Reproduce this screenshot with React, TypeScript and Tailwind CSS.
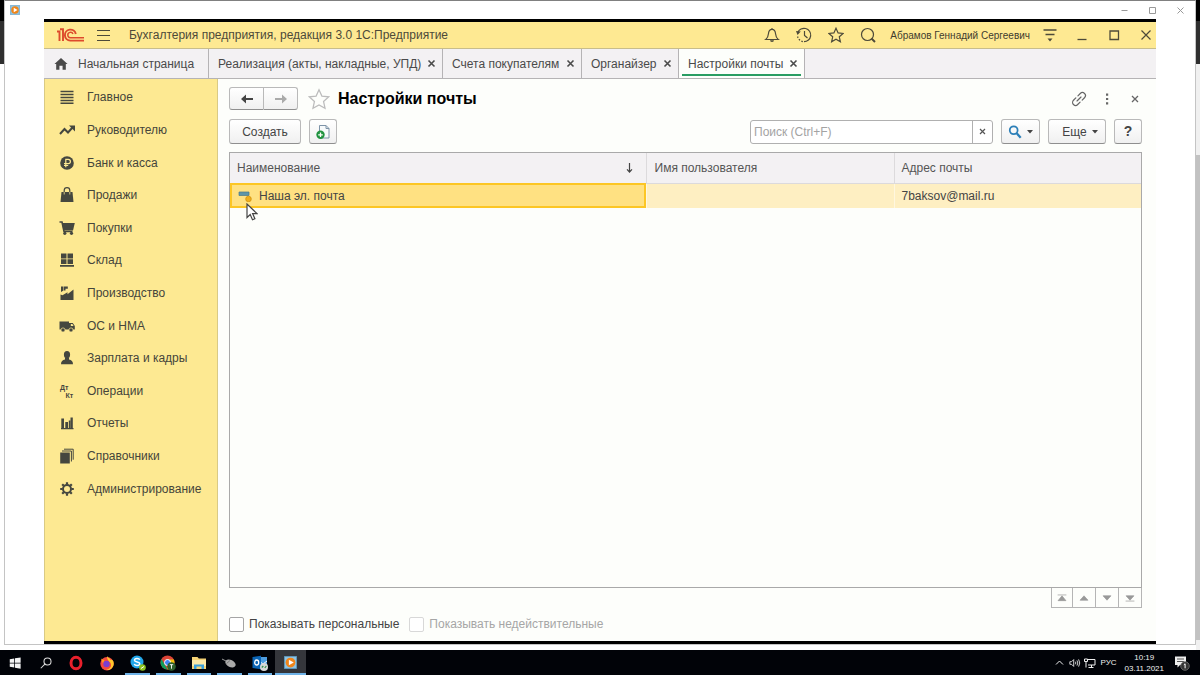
import React, { useState } from 'react';

interface IconProps {
  children: React.ReactNode;
  size?: string;
  className?: string;
  viewBox?: string;
}

const Icon: React.FC<IconProps> = ({ children, size = 'w-4 h-4', className = '', viewBox = '0 0 16 16' }) => (
  <svg viewBox={viewBox} className={`${size} shrink-0 ${className}`} fill="none" stroke="none" aria-hidden="true">
    {children}
  </svg>
);

const sections: { label: string; icon: React.ReactNode }[] = [
  {
    label: 'Главное',
    icon: <path d="M1.500 2.500h13M1.500 5.500h13M1.500 8.500h13M1.500 11.500h13M1.500 14.200h13" stroke="currentColor" strokeWidth="1.500" />,
  },
  {
    label: 'Руководителю',
    icon: (
      <>
        <path d="M1 12l4.500-5 3.500 3.500 4.500-5" stroke="currentColor" strokeWidth="2" />
        <path d="M10 3.500h6v6z" fill="currentColor" />
      </>
    ),
  },
  {
    label: 'Банк и касса',
    icon: (
      <>
        <circle cx="8" cy="8" r="6.800" fill="currentColor" />
        <path d="M6.800 12.200V4.300h2.400a2.200 2.200 0 010 4.400H5M5 10.500h4.200" stroke="#fde992" strokeWidth="1.200" />
      </>
    ),
  },
  {
    label: 'Продажи',
    icon: (
      <>
        <path d="M2.500 5h11l1 10h-13z" fill="currentColor" />
        <path d="M5.200 5V3.500a2.800 2.800 0 015.600 0V5" stroke="currentColor" strokeWidth="1.200" />
        <path d="M5.200 5v2.500M10.800 5v2.500" stroke="#fde992" strokeWidth="0.800" />
      </>
    ),
  },
  {
    label: 'Покупки',
    icon: (
      <>
        <path d="M0.500 2H3l2 9.500h8.500" stroke="currentColor" strokeWidth="1.600" />
        <path d="M3 3h12.800L14 10.500H4.500z" fill="currentColor" />
        <circle cx="5.800" cy="13.300" r="1.600" fill="currentColor" />
        <circle cx="12.500" cy="13.300" r="1.600" fill="currentColor" />
      </>
    ),
  },
  {
    label: 'Склад',
    icon: <path d="M2 1.500h5.500v5H2zM8.500 1.500H14v5H8.500zM2 7.300h5.500v4.700H2zM8.500 7.300H14v4.700H8.500zM1 13h14v1.800H1z" fill="currentColor" />,
  },
  {
    label: 'Производство',
    icon: <path d="M1.500 15V9.500l2 .8 5-3v2l6-4.800V15zM2 1.500h2.500v4L2 7zM5 1.500h3.800v2.300H6.500v1.700H5z" fill="currentColor" />,
  },
  {
    label: 'ОС и НМА',
    icon: (
      <>
        <path d="M0.500 3.500h9.500v8H0.500zM10 5h3.800l2 3v3.500H10z" fill="currentColor" />
        <path d="M11.800 6h1.600l1.200 2h-2.800z" fill="#fde992" />
        <circle cx="4" cy="12" r="2.100" fill="currentColor" stroke="#fde992" strokeWidth="0.700" />
        <circle cx="12" cy="12" r="2.100" fill="currentColor" stroke="#fde992" strokeWidth="0.700" />
      </>
    ),
  },
  {
    label: 'Зарплата и кадры',
    icon: (
      <>
        <ellipse cx="8" cy="4.700" rx="3.100" ry="3.600" fill="currentColor" />
        <path d="M2 14.300c0-3 1.500-4.300 4-4.800V7.500h4v2c2.500.5 4 1.800 4 4.800z" fill="currentColor" />
      </>
    ),
  },
  {
    label: 'Операции',
    icon: (
      <>
        <text x="1" y="6.500" fontSize="7" fontWeight="bold" fill="currentColor">Дт</text>
        <text x="6.500" y="14.500" fontSize="7" fontWeight="bold" fill="currentColor">Кт</text>
      </>
    ),
  },
  {
    label: 'Отчеты',
    icon: <path d="M2.300 3.500H5V13H2.300zM6.300 7H9v6H6.300zM9.800 5.500h1.500V13H9.800zM11.500 2.500h2.300V13h-2.300zM2 13h12.500v1.300H2z" fill="currentColor" />,
  },
  {
    label: 'Справочники',
    icon: (
      <>
        <path d="M1.200 4.500h9.600V15.500H1.200z" fill="currentColor" />
        <path d="M3 3h9.400v10.500M5 1.200h9.200v10.500" stroke="currentColor" />
      </>
    ),
  },
  {
    label: 'Администрирование',
    icon: (
      <>
        <circle cx="8" cy="8" r="4" stroke="currentColor" strokeWidth="2" />
        <path
          d="M8 1.200v2.300M8 12.500v2.300M1.200 8h2.300M12.500 8h2.300M3.200 3.200l1.600 1.600M11.200 11.200l1.600 1.600M3.200 12.800l1.600-1.600M11.200 4.800l1.600-1.600"
          stroke="currentColor"
          strokeWidth="2.200"
        />
      </>
    ),
  },
];

const tabs = [
  { label: 'Реализация (акты, накладные, УПД)', width: 'w-[234px]' },
  { label: 'Счета покупателям', width: 'w-[139px]' },
  { label: 'Органайзер', width: 'w-[97px]' },
  { label: 'Настройки почты', width: 'w-[126px]', active: true },
];

const STAR = 'M8 1.200l2.100 4.700 5 .5-3.800 3.400 1.100 5L8 12.300l-4.400 2.500 1.100-5L0.900 6.400l5-.5z';
const BUTTON = 'flex items-center justify-center border border-[#b9b9b9] border-b-[#8f8f8f] rounded-[3px] bg-linear-to-b from-white to-[#f0f0f0] text-[#444]';

const HeaderBar = () => (
  <header className="h-[27px] shrink-0 bg-[#fee992] border-b border-[#c8bd8b] flex items-center pl-3 pr-[2px] text-[#4d4a39]">
    <Icon size="w-7 h-4" viewBox="0 0 28 16" className="mr-3">
      <path d="M1 4.500h2.500V14M4 2.300h3V14" stroke="#dd4a2c" strokeWidth="1.900" />
      <path d="M19.800 7A5.500 5.500 0 1014.300 13.600H28" stroke="#dd4a2c" strokeWidth="1.900" />
      <path d="M17 7A2.700 2.700 0 1014.300 10.700H28" stroke="#dd4a2c" strokeWidth="1.500" />
    </Icon>
    <button aria-label="Меню" className="mr-[18px]">
      <Icon size="w-[15px] h-4" viewBox="0 0 15 16">
        <path d="M1 3.500h13M1 8.500h13M1 13.500h13" stroke="currentColor" strokeWidth="1.200" />
      </Icon>
    </button>
    <h1 className="text-[12px]">Бухгалтерия предприятия, редакция 3.0 1С:Предприятие</h1>
    <div className="ml-auto flex items-center gap-4">
      <button aria-label="Уведомления">
        <Icon>
          <path d="M1.800 12.500h12.400c-2-1.500-2.400-3-2.700-6C11.300 3.800 10.200 2.300 8 2.300S4.700 3.800 4.500 6.500c-.3 3-.7 4.500-2.700 6zM8 1v1.300" stroke="currentColor" strokeWidth="1.200" />
          <path d="M6 13.200h4a2 1.800 0 01-4 0z" fill="currentColor" />
        </Icon>
      </button>
      <button aria-label="История">
        <Icon>
          <path d="M1.800 5.500A6.700 6.700 0 118 14.700M8.500 4v4.500l3 2.500" stroke="currentColor" strokeWidth="1.200" />
          <path d="M1.600 9.500A6.700 6.700 0 008 14.700" stroke="currentColor" strokeWidth="1.200" strokeDasharray="1.500 1.500" />
          <path d="M0 4l4.800.5L1.500 8z" fill="currentColor" />
        </Icon>
      </button>
      <button aria-label="Избранное">
        <Icon>
          <path d={STAR} stroke="currentColor" strokeWidth="1.200" />
        </Icon>
      </button>
      <button aria-label="Поиск">
        <Icon>
          <circle cx="7.500" cy="7.500" r="6" stroke="currentColor" strokeWidth="1.200" />
          <path d="M11.500 11.500l3.500 3.500" stroke="currentColor" strokeWidth="2" />
        </Icon>
      </button>
    </div>
    <span className="ml-[14px] text-[10px] text-[#3f3c2e]">Абрамов Геннадий Сергеевич</span>
    <button aria-label="Сервис" className="ml-3">
      <Icon>
        <path d="M1.500 3h13M3.500 7.500h9" stroke="currentColor" strokeWidth="1.300" />
        <path d="M5.500 11.500h5L8 14.500z" fill="currentColor" />
      </Icon>
    </button>
    <div className="ml-4 flex gap-4">
      <button aria-label="Свернуть">
        <Icon><path d="M3.500 12.500h9" stroke="currentColor" strokeWidth="1.300" /></Icon>
      </button>
      <button aria-label="Развернуть">
        <Icon><path d="M4 4h8.500v8.500H4z" stroke="currentColor" strokeWidth="1.300" /></Icon>
      </button>
      <button aria-label="Закрыть программу">
        <Icon><path d="M3.500 3.500l9 9M12.500 3.500l-9 9" stroke="currentColor" strokeWidth="1.200" /></Icon>
      </button>
    </div>
  </header>
);

const TabBar = () => (
  <div className="h-[30px] shrink-0 bg-[#f3f1f3] border-b border-[#b5b3b5] flex text-[12px] text-[#4a4a4a]">
    <button className="w-[165px] border-r border-[#b5b3b5] flex items-center pl-[10px] gap-[10px]">
      <Icon size="w-[14px] h-[14px]">
        <path d="M8 1l7.500 7h-2v6.500H9.800V10H6.200v4.500H2.500V8h-2z" fill="currentColor" />
      </Icon>
      Начальная страница
    </button>
    {tabs.map((tab) => (
      <div
        key={tab.label}
        className={`${tab.width} relative border-r border-[#b5b3b5] flex items-center justify-between pl-[9px] pr-[6px] ${tab.active ? 'bg-[#fdfefb]' : ''}`}
      >
        <button className="whitespace-nowrap">{tab.label}</button>
        <button aria-label="Закрыть вкладку">
          <Icon size="w-[9px] h-[9px]" viewBox="0 0 9 9">
            <path d="M1.500 1.500l6 6M7.500 1.500l-6 6" stroke="currentColor" strokeWidth="1.600" />
          </Icon>
        </button>
        {tab.active && <span className="absolute left-[3px] right-[3px] bottom-[2px] h-[2px] bg-[#2a9d63]" />}
      </div>
    ))}
  </div>
);

const Sidebar = () => (
  <nav className="w-[174px] shrink-0 bg-[#fde992] border-x border-[#d9ca85] pt-[2px]">
    <ul className="h-[424px] grid grid-rows-13 text-[12px] text-[#45453b]">
      {sections.map((section) => (
        <li key={section.label} className="flex">
          <a href="#" className="flex items-center w-full pl-[14px] gap-3 whitespace-nowrap">
            <Icon className="text-[#45473f]">{section.icon}</Icon>
            {section.label}
          </a>
        </li>
      ))}
    </ul>
  </nav>
);

const pagerIcons = [
  { label: 'В начало', d: 'M3 4.500h10M8 5.500L3.500 11h9z' },
  { label: 'Вверх', d: 'M8 5.500L3.500 10.500h9z' },
  { label: 'Вниз', d: 'M8 10.500L3.500 5.500h9z' },
  { label: 'В конец', d: 'M8 10.500L3.500 5.500h9zM3 11.500h10' },
];

const MailSettings = () => {
  const [query, setQuery] = useState('');
  const [personal, setPersonal] = useState(false);

  return (
    <main className="flex-1 min-w-0 bg-[#fdfefb] pl-[11px] pr-[14px] pt-2 pb-[9px] flex flex-col text-[12px] text-[#444]">
      <div className="flex items-center h-[23px]">
        <div className="flex">
          <button aria-label="Назад" className={`${BUTTON} w-[35px] h-[23px] rounded-r-none`}>
            <Icon><path d="M7 3.500L2 8l5 4.500V9.100h7V6.900H7z" fill="#444" /></Icon>
          </button>
          <button aria-label="Вперед" className={`${BUTTON} w-[34px] h-[23px] rounded-l-none border-l-0`}>
            <Icon><path d="M9 3.500L14 8l-5 4.500V8.900H2V7.100h7z" fill="#aaa" /></Icon>
          </button>
        </div>
        <button aria-label="В избранное" className="ml-[10px]">
          <Icon size="w-[22px] h-[22px]"><path d={STAR} stroke="#bcbcbc" strokeWidth="0.900" /></Icon>
        </button>
        <h2 className="ml-2 text-[16px] font-bold text-black">Настройки почты</h2>
        <div className="ml-auto flex items-center text-[#666]">
          <button aria-label="Ссылка">
            <Icon>
              <g transform="rotate(-45 8 8)" stroke="currentColor" strokeWidth="1.200" strokeLinecap="round">
                <path d="M6.500 5H3.200a3 3 0 000 6h3.300M9.500 5h3.300a3 3 0 010 6H9.500M5.200 8h5.600" />
              </g>
            </Icon>
          </button>
          <button aria-label="Действия" className="ml-3">
            <Icon><path d="M7 2.500h2.200v2.200H7zM7 6.900h2.200v2.200H7zM7 11.300h2.200v2.200H7z" fill="currentColor" /></Icon>
          </button>
          <button aria-label="Закрыть" className="ml-3 -mr-px">
            <Icon><path d="M5 5l6 6M11 5l-6 6" stroke="currentColor" strokeWidth="1.300" /></Icon>
          </button>
        </div>
      </div>

      <div className="mt-[9px] flex items-center h-[25px]">
        <button className={`${BUTTON} w-[72px] h-[25px]`}>Создать</button>
        <button aria-label="Создать копированием" className={`${BUTTON} ml-2 w-7 h-[25px]`}>
          <Icon>
            <path d="M4.500 1.500h6.500l3 3v9.500H4.500z" stroke="#7d93a8" fill="#f7fafc" />
            <path d="M11 1.500v3h3" stroke="#7d93a8" />
            <circle cx="5.500" cy="10.800" r="4.200" fill="#219340" />
            <path d="M5.500 8.500v4.600M3.200 10.800h4.600" stroke="#fff" strokeWidth="1.300" />
          </Icon>
        </button>
        <div className="ml-auto w-[243px] h-6 flex border border-[#b0b0b0] rounded-[3px] bg-white">
          <input
            aria-label="Поиск"
            className="flex-1 min-w-0 px-[3px] outline-none placeholder:text-[#a3a3a3]"
            placeholder="Поиск (Ctrl+F)"
            value={query}
            onChange={(e) => setQuery(e.target.value)}
          />
          <button aria-label="Очистить" className="w-5 border-l border-[#b0b0b0] flex items-center justify-center" onClick={() => setQuery('')}>
            <Icon size="w-[7px] h-[7px]" viewBox="0 0 7 7"><path d="M1 1l5 5M6 1L1 6" stroke="#555" strokeWidth="1.200" /></Icon>
          </button>
        </div>
        <button aria-label="Найти" className={`${BUTTON} ml-2 w-[39px] h-[25px] gap-[5px]`}>
          <Icon size="w-[14px] h-[14px]">
            <circle cx="6.500" cy="6" r="4.500" stroke="#2c7fb8" strokeWidth="2" />
            <path d="M10 9.500l4.500 5" stroke="#2c7fb8" strokeWidth="2.600" />
          </Icon>
          <Icon size="w-[6px] h-1" viewBox="0 0 6 4"><path d="M0 0h6L3 3.500z" fill="#444" /></Icon>
        </button>
        <button className={`${BUTTON} ml-2 w-[58px] h-[25px] gap-[5px] pl-[6px]`}>
          Еще
          <Icon size="w-[6px] h-1" viewBox="0 0 6 4"><path d="M0 0h6L3 3.500z" fill="#444" /></Icon>
        </button>
        <button className={`${BUTTON} ml-2 w-7 h-[25px] text-[14px] font-bold`}>?</button>
      </div>

      <div className="mt-2 flex-1 border border-[#a9a9a9]">
        <table className="w-full table-fixed border-collapse text-left">
          <colgroup>
            <col className="w-[416px]" />
            <col className="w-[248px]" />
            <col />
          </colgroup>
          <thead>
            <tr className="h-[30px] bg-[#f3f1f3] border-b border-[#dcdadc] text-[#555]">
              <th className="pl-[7px] font-normal">
                <div className="flex items-center justify-between pr-3">
                  Наименование
                  <Icon size="w-[9px] h-[11px]" viewBox="0 0 9 11">
                    <path d="M4.500 1v9M2 7.300L4.500 10 7 7.300" stroke="#444" strokeWidth="1.200" />
                  </Icon>
                </div>
              </th>
              <th className="pl-2 font-normal border-l border-[#dcdadc]">Имя пользователя</th>
              <th className="pl-[7px] font-normal border-l border-[#dcdadc]">Адрес почты</th>
            </tr>
          </thead>
          <tbody>
            <tr className="h-[25px] bg-[#feefc2]">
              <td className="pl-2 bg-[#ffe182] outline-2 -outline-offset-2 outline-[#fcc624]">
                <div className="relative flex items-center gap-[7px]">
                  <Icon size="w-[14px] h-3" viewBox="0 0 14 12">
                    <path d="M1 2h10v3.500H1z" fill="#5f96a8" stroke="#47788a" strokeWidth="0.700" />
                    <circle cx="10.500" cy="9" r="2.800" fill="#f0b01c" stroke="#cf8e0c" strokeWidth="0.700" />
                  </Icon>
                  Наша эл. почта
                  <Icon size="w-3 h-[18px]" viewBox="0 0 12 18" className="absolute left-2 top-4 z-10">
                    <path d="M1 1v13.500l3.200-3 2.300 5.300 2.400-1-2.300-5.200H11z" fill="#fff" stroke="#444" strokeWidth="1.200" />
                  </Icon>
                </div>
              </td>
              <td className="border-l border-[#fff7df]" />
              <td className="pl-[7px] border-l border-[#fff7df]">7baksov@mail.ru</td>
            </tr>
          </tbody>
        </table>
      </div>

      <div className="ml-auto flex border border-t-0 border-[#b5b5b5]">
        {pagerIcons.map((item, i) => (
          <button key={item.label} aria-label={item.label} className={`h-[19px] flex items-center justify-center border-[#b5b5b5] ${i ? 'w-[23px] border-l' : 'w-5'}`}>
            <Icon size="w-[14px] h-[14px]"><path d={item.d} fill="#999" stroke="#999" strokeWidth="0.800" /></Icon>
          </button>
        ))}
      </div>

      <div className="mt-2 flex items-center gap-[10px] h-4">
        <label className="flex items-center gap-[5px]">
          <input
            type="checkbox"
            checked={personal}
            onChange={(e) => setPersonal(e.target.checked)}
            className="appearance-none w-[15px] h-[15px] border border-[#a5a5a5] rounded-[2px] bg-white checked:bg-[#2a9d63]"
          />
          Показывать персональные
        </label>
        <label className="flex items-center gap-[5px] text-[#a6a6a6]">
          <input type="checkbox" disabled className="appearance-none w-[15px] h-[15px] border border-[#d8d8d8] rounded-[2px] bg-white" />
          Показывать недействительные
        </label>
      </div>
    </main>
  );
};

const PlayIcon = ({ size }: { size: string }) => (
  <Icon size={size}>
    <path d="M0.500 0.500h15v15H0.500z" fill="#8fc3e2" stroke="#5d9cc4" />
    <circle cx="8" cy="8" r="6" fill="#f08519" />
    <path d="M6 4.500v7L12 8z" fill="#fff" />
  </Icon>
);

const apps: { label: string; icon: React.ReactNode; open?: boolean; active?: boolean }[] = [
  {
    label: 'Opera',
    icon: <Icon><ellipse cx="8" cy="8" rx="5" ry="5.800" stroke="#e8202c" strokeWidth="3" /></Icon>,
  },
  {
    label: 'Firefox',
    icon: (
      <Icon>
        <circle cx="8" cy="8.800" r="6.700" fill="#f5493d" />
        <path d="M8 1c1 2 3 2 3.500 4C14 4 15 7 14.700 9.500 14 13 11 15.500 7 15c4-1 6-3.500 4.500-7C10 6 8 5 8 1z" fill="#ffc72c" />
        <path d="M2 3.500c1 1 2 1 3.500 1.500L4 9z" fill="#ff9a1f" />
        <circle cx="7.500" cy="9" r="3.200" fill="#7a3fd0" />
      </Icon>
    ),
  },
  {
    label: 'Skype',
    open: true,
    icon: (
      <Icon>
        <circle cx="7" cy="7" r="6.500" fill="#22a7ea" />
        <path d="M9.800 4.800C9 3 4.500 3 4.500 5.200c0 2.300 5.300 1.200 5.300 3.500 0 2.200-4.800 2.200-5.600.3" stroke="#fff" strokeWidth="1.500" />
        <circle cx="12.500" cy="12.500" r="3.300" fill="#8cc11f" />
        <path d="M11 13.500l3-2" stroke="#fff" />
      </Icon>
    ),
  },
  {
    label: 'Chrome',
    open: true,
    icon: (
      <Icon>
        <circle cx="7.500" cy="7.500" r="7" fill="#db4437" />
        <path d="M1.500 4L7.500 14.500A7 7 0 011.500 4z" fill="#0f9d58" />
        <path d="M7.500 4.500h6.300a7 7 0 01-6.300 10z" fill="#f4c20d" />
        <circle cx="7.500" cy="7.500" r="3" fill="#4285f4" stroke="#fff" />
        <circle cx="11.500" cy="11.500" r="4.300" fill="#2d5f2b" />
        <path d="M9.800 9.700h3.400M11.500 9.700v4" stroke="#fff" strokeWidth="0.900" />
      </Icon>
    ),
  },
  {
    label: 'Проводник',
    open: true,
    icon: (
      <Icon>
        <path d="M1 2h5.500l1.300 1.500H15V14H1z" fill="#f5d376" />
        <path d="M1 5h14v6H1z" fill="#fce9a8" />
        <path d="M3 14V9.500h10V14h-2.500v-2.500h-5V14z" fill="#3aa0dc" />
      </Icon>
    ),
  },
  {
    label: 'Мышь',
    open: true,
    icon: (
      <Icon>
        <path d="M1 4l4 2" stroke="#999" />
        <ellipse cx="9.500" cy="8.500" rx="5.500" ry="3.500" fill="#aaa" transform="rotate(25 9.500 8.500)" />
        <path d="M5.500 8.500L9 5.500" stroke="#777" />
      </Icon>
    ),
  },
  {
    label: 'Outlook',
    open: true,
    icon: (
      <Icon>
        <path d="M7 2h8v9H7z" fill="#4d9de0" />
        <path d="M7 6l4 3 4-3" stroke="#fff" />
        <path d="M0.500 2L9 0.800v13.400L0.500 13z" fill="#0a64b4" />
        <ellipse cx="4.700" cy="7.500" rx="2" ry="2.500" stroke="#fff" strokeWidth="1.300" />
        <circle cx="12" cy="12" r="4" fill="#d7d7d7" />
        <path d="M9.800 12.500l1.500-1.500M12.800 13l1.500-2" stroke="#2c8f49" strokeWidth="1.200" />
      </Icon>
    ),
  },
  { label: 'Проигрыватель', open: true, active: true, icon: <PlayIcon size="w-[13px] h-[13px]" /> },
];

const Taskbar = () => (
  <footer className="h-[25px] shrink-0 bg-[#010308] text-white flex items-stretch">
    <button aria-label="Пуск" className="w-[30px] flex items-center justify-center">
      <Icon size="w-3 h-3"><path d="M1 3l6-1v5.500H1zM8 1.800L15.500 0.500v7H8zM1 8.500h6V14l-6-1zM8 8.500h7.500v7L8 14.200z" fill="#f4f4f4" /></Icon>
    </button>
    <button aria-label="Поиск в Windows" className="w-[31px] flex items-center justify-center">
      <Icon size="w-3 h-3">
        <circle cx="10" cy="6" r="4.700" stroke="#ddd" strokeWidth="1.400" />
        <path d="M6.500 9.500L1 15" stroke="#ddd" strokeWidth="1.400" />
      </Icon>
    </button>
    <div className="w-[245px] grid grid-cols-8">
      {apps.map((app) => (
        <button key={app.label} aria-label={app.label} className={`relative flex items-center justify-center ${app.active ? 'bg-[#34363b]' : ''}`}>
          {app.icon}
          {app.open && <span className={`absolute bottom-0 h-[2px] bg-[#6fb3e8] ${app.active ? 'inset-x-0' : 'inset-x-[3px]'}`} />}
        </button>
      ))}
    </div>
    <div className="ml-auto flex items-center text-[8px] text-[#f0f0f0] font-['Noto_Sans',sans-serif]">
      <Icon size="w-[9px] h-[9px]" viewBox="0 0 9 9" className="mr-[5px]"><path d="M1 6.500L4.500 3 8 6.500" stroke="currentColor" /></Icon>
      <Icon size="w-3 h-3" viewBox="0 0 14 12">
        <path d="M1 4.500h2L5.500 2v8L3 7.500H1zM7.500 4.500q1 1.500 0 3M9.300 3q2 3 0 6M11.200 1.800q2.700 4.200 0 8.400" stroke="currentColor" />
      </Icon>
      <Icon size="w-3 h-3" viewBox="0 0 12 12" className="ml-[3px]">
        <path d="M3.500 2.500h7.500v5.500H4M7.500 8v2.500M4.500 10.500h5M2 4.500v6M0.500 2h3v2.500h-3z" stroke="currentColor" />
      </Icon>
      <span className="ml-[5px] font-['Liberation_Sans',sans-serif]">РУС</span>
      <div className="ml-2 text-center leading-[11px] font-['Liberation_Sans',sans-serif]">
        <div>10:19</div>
        <div>03.11.2021</div>
      </div>
      <button aria-label="Центр уведомлений" className="ml-[10px] mr-[10px]">
        <Icon>
          <path d="M1 1.500h11v8.500H6L3.500 12.500V10H1z" fill="#eee" />
          <path d="M3 4h7M3 6.500h7" stroke="#444" strokeWidth="0.900" />
          <circle cx="11" cy="11" r="4.300" fill="#333" stroke="#777" strokeWidth="0.800" />
          <path d="M9.800 9.800l1.300-1v4.500" stroke="#fff" />
        </Icon>
      </button>
    </div>
  </footer>
);

export default function App() {
  return (
    <div className="h-screen flex flex-col overflow-hidden bg-white font-['Liberation_Sans',Arial,sans-serif]">
      <div className="flex-1 min-h-0 flex">
        <div className="w-1 shrink-0 flex flex-col">
          <div className="h-[21px] bg-black" />
          <div className="h-[43px] bg-[#2f2f2f]" />
        </div>
        <div className="flex-1 min-w-0 flex flex-col mb-[5px] border border-t-[#808080] border-[#c4c4c4]">
          <div className="h-[18px] shrink-0 flex items-center justify-between pl-[5px] pr-[10px] text-[#999]">
            <PlayIcon size="w-[10px] h-[10px]" />
            <div className="flex gap-[19px]">
              <button aria-label="Свернуть проигрыватель">
                <Icon size="w-[9px] h-[9px]" viewBox="0 0 9 9"><path d="M1.500 4.500h6" stroke="currentColor" /></Icon>
              </button>
              <button aria-label="Развернуть проигрыватель">
                <Icon size="w-[9px] h-[9px]" viewBox="0 0 9 9"><path d="M1.500 1.500h6v6h-6z" stroke="currentColor" /></Icon>
              </button>
              <button aria-label="Закрыть проигрыватель">
                <Icon size="w-[9px] h-[9px]" viewBox="0 0 9 9"><path d="M1.500 1.500l6 6M7.500 1.500l-6 6" stroke="currentColor" /></Icon>
              </button>
            </div>
          </div>
          <div className="flex-1 min-h-0 mx-[39px] flex flex-col border-t-3 border-b-3 border-black">
            <HeaderBar />
            <TabBar />
            <div className="flex-1 min-h-0 flex">
              <Sidebar />
              <MailSettings />
            </div>
          </div>
        </div>
        <div className="w-1 shrink-0 flex flex-col bg-[#f0f0f0]">
          <div className="h-[21px] bg-black" />
          <div className="h-[43px] bg-[#2f2f2f]" />
          <div className="mt-[91px] mb-[10px] flex-1 bg-[#c2c2c2]" />
        </div>
      </div>
      <Taskbar />
    </div>
  );
}
